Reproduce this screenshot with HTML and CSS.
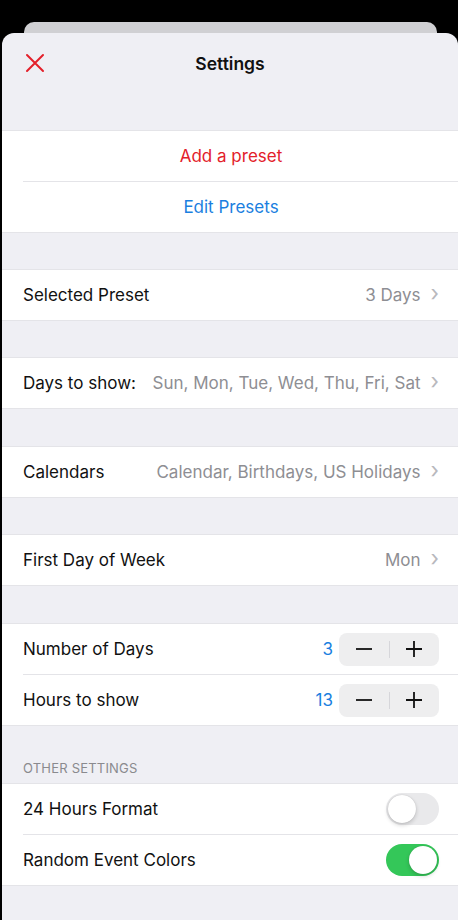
FILE: index.html
```html
<!DOCTYPE html>
<html>

<head>
  <meta charset="UTF-8">
  <title>Settings</title>
  <link rel="stylesheet" href="styles.css">
</head>

<body>
  <div class="back-card"></div>
  <div class="sheet">
    <div class="sheet-header">
      <svg class="close-icon" width="20" height="20" viewBox="0 0 20 20">
        <path d="M2 2 L18 18 M18 2 L2 18" stroke="#e3202a" stroke-width="2" stroke-linecap="round" fill="none" />
      </svg>
      <div class="sheet-title">Settings</div>
    </div>

    <div class="group">
      <div class="row row-center text-red">Add a preset</div>
      <div class="row row-center text-blue">Edit Presets</div>
    </div>

    <div class="gap"></div>
    <div class="group">
      <div class="row">
        <span class="label">Selected Preset</span>
        <span class="value">3 Days</span>
        <span class="chevron">›</span>
      </div>
    </div>

    <div class="gap"></div>
    <div class="group">
      <div class="row">
        <span class="label">Days to show:</span>
        <span class="value">Sun, Mon, Tue, Wed, Thu, Fri, Sat</span>
        <span class="chevron">›</span>
      </div>
    </div>

    <div class="gap gap-wide"></div>
    <div class="group">
      <div class="row">
        <span class="label">Calendars</span>
        <span class="value">Calendar, Birthdays, US Holidays</span>
        <span class="chevron">›</span>
      </div>
    </div>

    <div class="gap"></div>
    <div class="group">
      <div class="row">
        <span class="label">First Day of Week</span>
        <span class="value">Mon</span>
        <span class="chevron">›</span>
      </div>
    </div>

    <div class="gap gap-wide"></div>
    <div class="group">
      <div class="row">
        <span class="label">Number of Days</span>
        <span class="count">3</span>
        <div class="stepper">
          <span class="step">
            <svg width="16" height="16" viewBox="0 0 16 16"><path d="M0 8 H16" stroke="#111" stroke-width="1.8" /></svg>
          </span>
          <span class="step-divider"></span>
          <span class="step">
            <svg width="16" height="16" viewBox="0 0 16 16"><path d="M0 8 H16 M8 0 V16" stroke="#111" stroke-width="1.8" /></svg>
          </span>
        </div>
      </div>
      <div class="row">
        <span class="label">Hours to show</span>
        <span class="count">13</span>
        <div class="stepper">
          <span class="step">
            <svg width="16" height="16" viewBox="0 0 16 16"><path d="M0 8 H16" stroke="#111" stroke-width="1.8" /></svg>
          </span>
          <span class="step-divider"></span>
          <span class="step">
            <svg width="16" height="16" viewBox="0 0 16 16"><path d="M0 8 H16 M8 0 V16" stroke="#111" stroke-width="1.8" /></svg>
          </span>
        </div>
      </div>
    </div>

    <div class="section-title">OTHER SETTINGS</div>
    <div class="group">
      <div class="row">
        <span class="label">24 Hours Format</span>
        <span class="toggle"><span class="knob"></span></span>
      </div>
      <div class="row">
        <span class="label">Random Event Colors</span>
        <span class="toggle on"><span class="knob"></span></span>
      </div>
    </div>
  </div>
</body>

</html>
```

FILE: styles.css
```css
body {
  margin: 0;
  padding: 0;
  background-color: #000;
  font-family: Inter, "Liberation Sans", sans-serif;
  color: #111;
  height: 920px;
  overflow: hidden;
}

/* card behind the sheet */
.back-card {
  height: 11px;
  margin: 22px 21px 0 24px;
  background-color: #d0d0d3;
  border-radius: 10px 10px 0 0;
}

.sheet {
  margin-left: 2px;
  height: 887px;
  background-color: #efeff4;
  border-radius: 12px 12px 0 0;
  overflow: hidden;
}

.sheet-header {
  display: flex;
  align-items: center;
  justify-content: center;
  position: relative;
  height: 60px;
  margin-bottom: 37px;
}

.close-icon {
  position: absolute;
  left: 23px;
  top: 20px;
}

.sheet-title {
  font-size: 17.5px;
  font-weight: 600;
  color: #111;
}

.group {
  background-color: #fff;
  border-top: 1px solid #e4e4e8;
  border-bottom: 1px solid #e4e4e8;
}

.row {
  display: flex;
  align-items: center;
  height: 50px;
  padding: 0 19px 0 21px;
  font-size: 17px;
  position: relative;
}

.row + .row::before {
  content: "";
  position: absolute;
  top: -1px;
  left: 21px;
  right: 0;
  border-top: 1px solid #e4e4e8;
}

.row + .row {
  margin-top: 1px;
}

.row-center {
  justify-content: center;
}

.text-red {
  color: #e3202a;
}

.text-blue {
  color: #1b7fe0;
}

.label {
  flex-grow: 1;
  white-space: nowrap;
}

.value {
  color: #8e8e93;
  white-space: nowrap;
}

.chevron {
  color: #b8b8bd;
  font-size: 22px;
  margin-left: 10px;
  line-height: 1;
  transform: translateY(-2px);
}

.gap {
  height: 36px;
}

.gap-wide {
  height: 37px;
}

/* stepper */
.count {
  color: #1b7fe0;
  margin-right: 6px;
}

.stepper {
  display: flex;
  align-items: center;
  width: 100px;
  height: 33px;
  background-color: #eeeeef;
  border-radius: 8px;
}

.step {
  flex: 1;
  display: flex;
  justify-content: center;
  align-items: center;
}

.step-divider {
  width: 1px;
  height: 17px;
  background-color: #d6d6da;
}

.section-title {
  font-size: 13px;
  color: #8a8a8e;
  padding: 34px 0 7px 21px;
  letter-spacing: 0.2px;
}

/* switch */
.toggle {
  display: flex;
  align-items: center;
  width: 53px;
  height: 32px;
  border-radius: 16px;
  background-color: #e9e9eb;
  padding: 2px;
  box-sizing: border-box;
}

.toggle.on {
  background-color: #34c759;
  justify-content: flex-end;
}

.knob {
  width: 28px;
  height: 28px;
  border-radius: 50%;
  background-color: #fff;
  box-shadow: 0 2px 4px rgba(0, 0, 0, 0.18), 0 0 1px rgba(0, 0, 0, 0.2);
}
```
